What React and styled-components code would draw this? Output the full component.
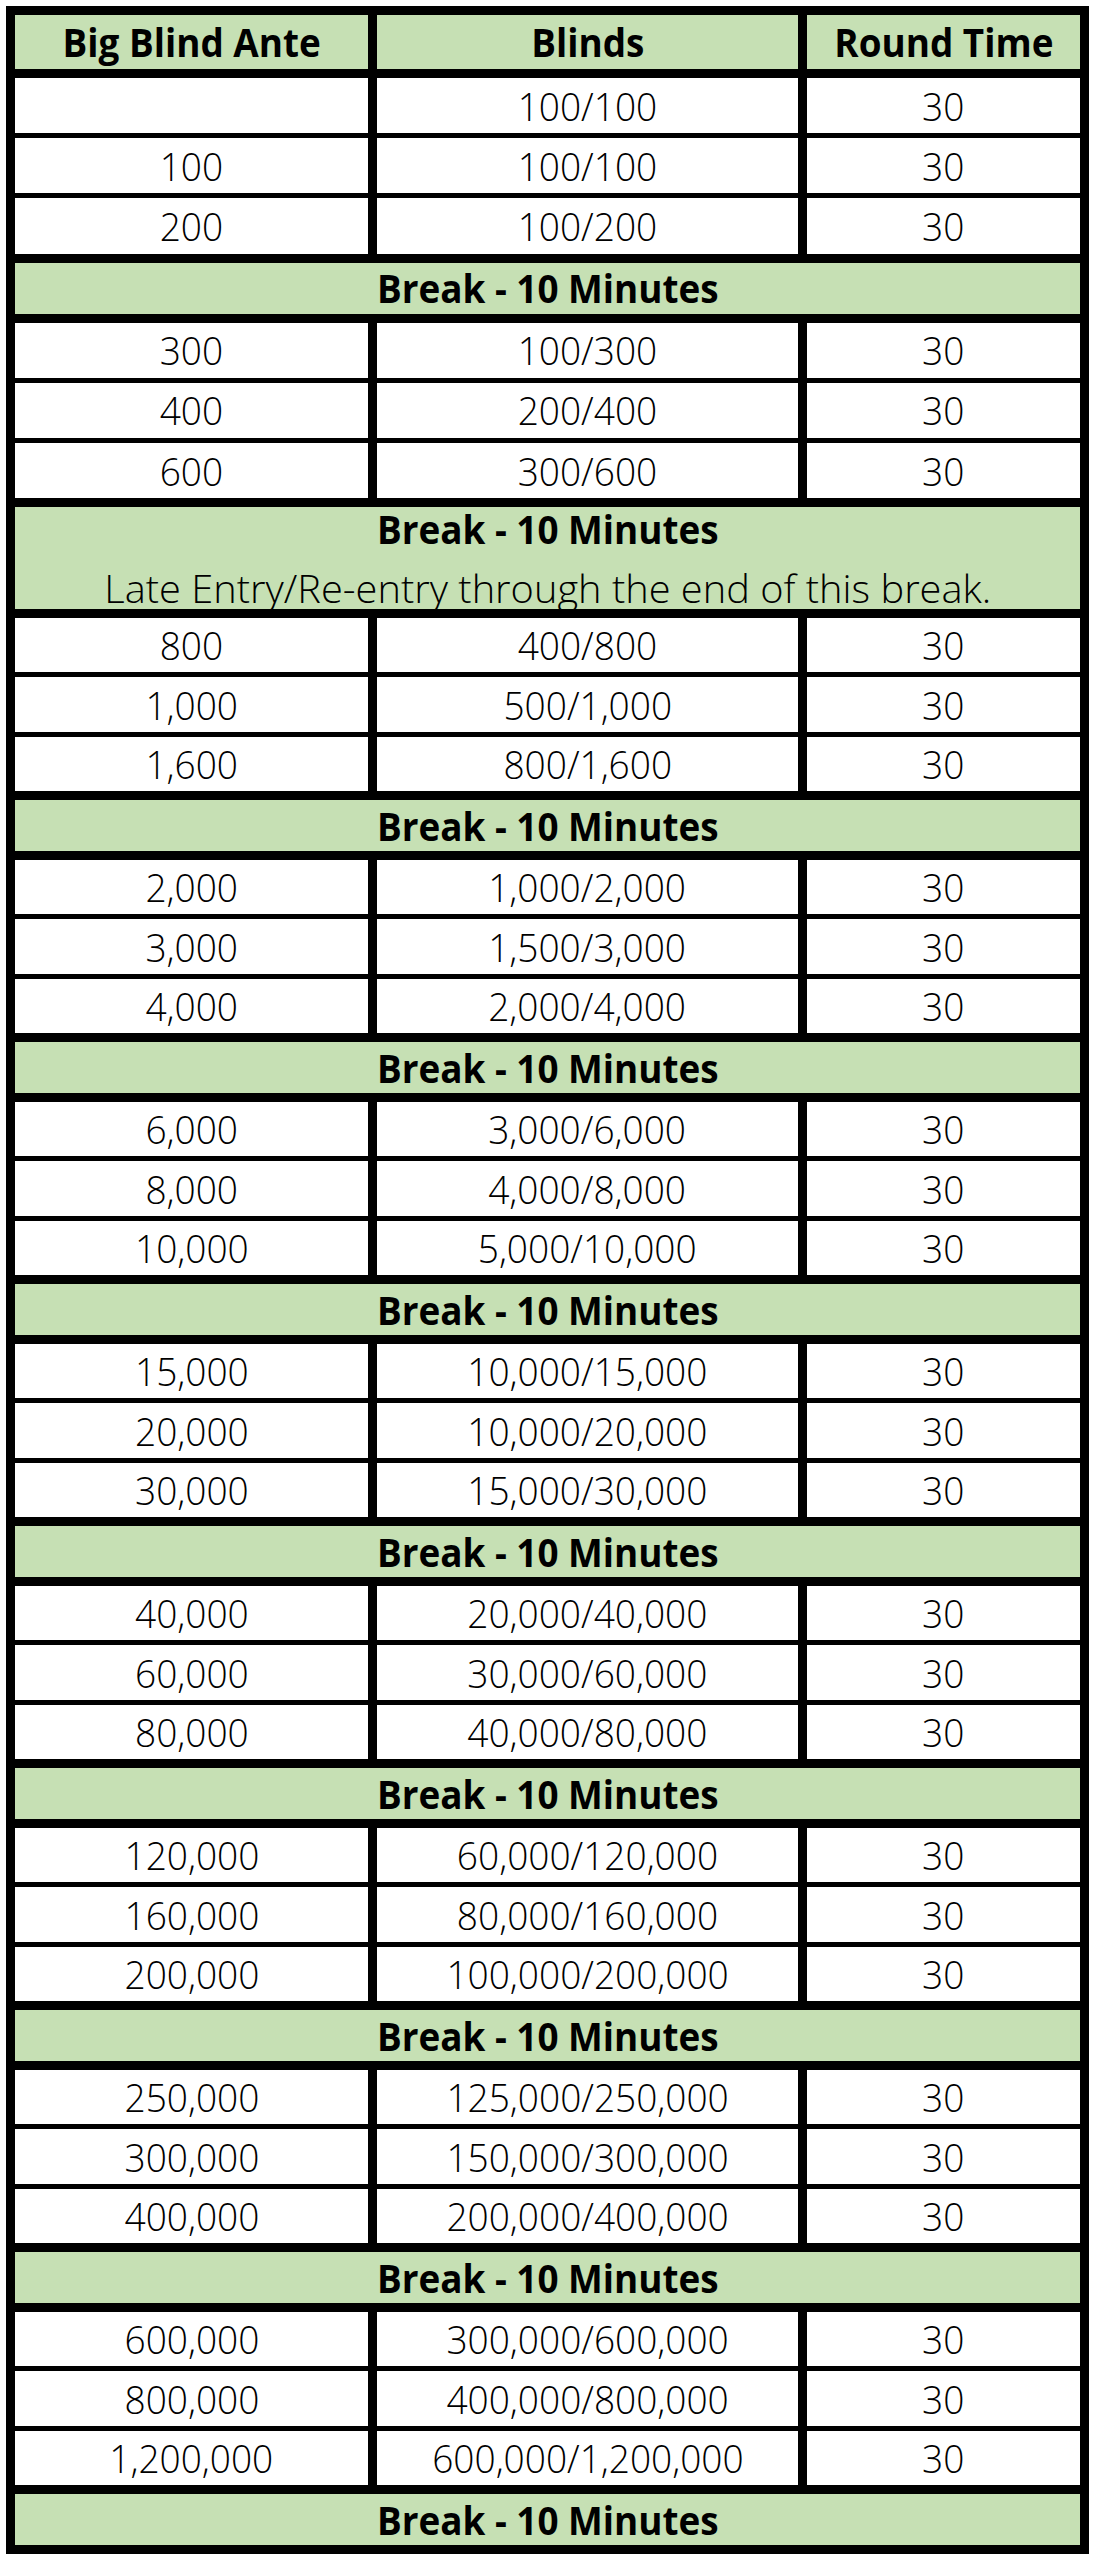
import React from "react";
import styled, { createGlobalStyle } from "styled-components";

const Global = createGlobalStyle`
  html, body { margin: 0; padding: 0; background: #fff; }
  body { font-family: "Open Sans", "Noto Sans", sans-serif; color: #000; }
`;

const Page = styled.div`
  width: 1096px;
  min-height: 2561px;
  padding: 6px 0 0 6px;
  box-sizing: border-box;
  background: #fff;
`;

const Sheet = styled.div`
  width: 1083px;
  box-sizing: border-box;
  border: 9px solid #000;
  background: #000;
  display: flex;
  flex-direction: column;
`;

const Row = styled.div`
  display: grid;
  grid-template-columns: 353px 1fr 273px;
  column-gap: 9px;
  height: ${(p) => p.$h}px;
  margin-top: ${(p) => p.$gap || 0}px;
`;

const Cell = styled.div`
  background: ${(p) => (p.$head ? "#c6e0b4" : "#fff")};
  display: flex;
  align-items: center;
  justify-content: center;
  overflow: hidden;
`;

const Text = styled.span`
  display: inline-block;
  font-size: 39px;
  line-height: 40px;
  font-weight: ${(p) => (p.$bold ? 700 : 350)};
  white-space: nowrap;
  transform: scaleX(${(p) => (p.$bold ? 0.945 : 0.95)});
  transform-origin: center;
`;

const Note = styled(Text)`
  transform: scaleX(1.02);
`;

const Break = styled.div`
  background: #c6e0b4;
  margin-top: 9px;
  height: ${(p) => (p.$double ? 102 : 51)}px;
  box-sizing: border-box;
  padding: ${(p) => (p.$double ? "2px 0 1px" : "0")};
  display: flex;
  flex-direction: column;
  align-items: center;
  justify-content: ${(p) => (p.$double ? "space-between" : "center")};
`;

const groups = [
  { rows: [["", "100/100"], ["100", "100/100"], ["200", "100/200"]] },
  {
    rows: [["300", "100/300"], ["400", "200/400"], ["600", "300/600"]],
    note: "Late Entry/Re-entry through the end of this break.",
  },
  { rows: [["800", "400/800"], ["1,000", "500/1,000"], ["1,600", "800/1,600"]] },
  { rows: [["2,000", "1,000/2,000"], ["3,000", "1,500/3,000"], ["4,000", "2,000/4,000"]] },
  { rows: [["6,000", "3,000/6,000"], ["8,000", "4,000/8,000"], ["10,000", "5,000/10,000"]] },
  { rows: [["15,000", "10,000/15,000"], ["20,000", "10,000/20,000"], ["30,000", "15,000/30,000"]] },
  { rows: [["40,000", "20,000/40,000"], ["60,000", "30,000/60,000"], ["80,000", "40,000/80,000"]] },
  { rows: [["120,000", "60,000/120,000"], ["160,000", "80,000/160,000"], ["200,000", "100,000/200,000"]] },
  { rows: [["250,000", "125,000/250,000"], ["300,000", "150,000/300,000"], ["400,000", "200,000/400,000"]] },
  { rows: [["600,000", "300,000/600,000"], ["800,000", "400,000/800,000"], ["1,200,000", "600,000/1,200,000"]] },
];

export default function App() {
  return (
    <Page>
      <Global />
      <Sheet>
        <Row $h={54}>
          <Cell $head><Text $bold>Big Blind Ante</Text></Cell>
          <Cell $head><Text $bold>Blinds</Text></Cell>
          <Cell $head><Text $bold>Round Time</Text></Cell>
        </Row>
        {groups.map((g, gi) => (
          <React.Fragment key={gi}>
            {g.rows.map((r, ri) => (
              <Row key={ri} $h={gi < 2 ? 55.2 : 54.33} $gap={ri === 0 ? 9 : 5}>
                <Cell><Text>{r[0]}</Text></Cell>
                <Cell><Text>{r[1]}</Text></Cell>
                <Cell><Text>30</Text></Cell>
              </Row>
            ))}
            <Break $double={!!g.note}>
              <Text $bold>Break - 10 Minutes</Text>
              {g.note && <Note>{g.note}</Note>}
            </Break>
          </React.Fragment>
        ))}
      </Sheet>
    </Page>
  );
}
